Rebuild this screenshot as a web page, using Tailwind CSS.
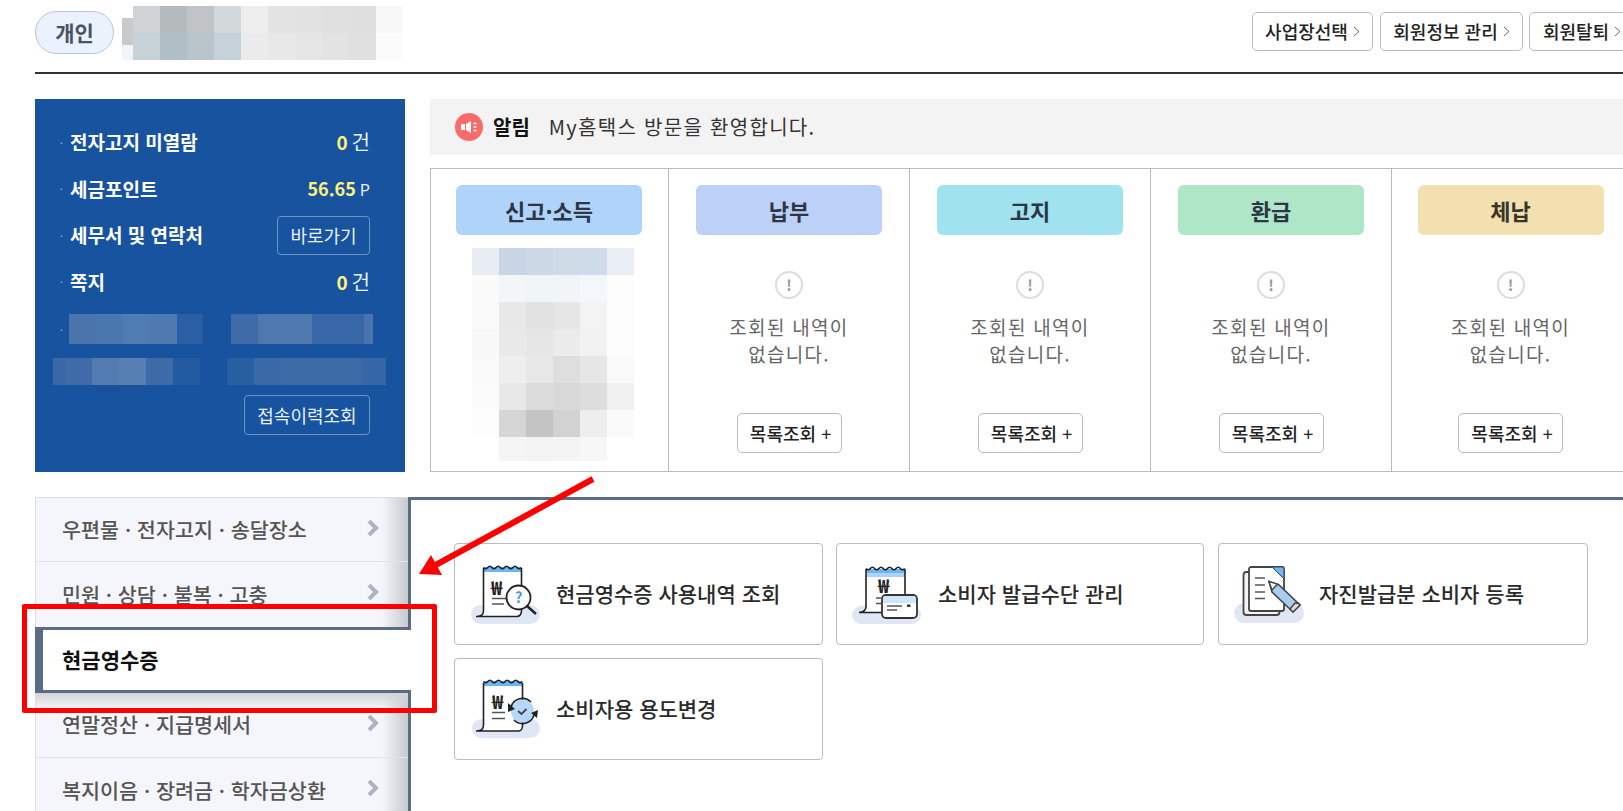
<!DOCTYPE html>
<html lang="ko">
<head>
<meta charset="UTF-8" />
<title>My 홈택스</title>
<script src="https://cdn.jsdelivr.net/npm/@tailwindcss/browser@4"></script>
</head>
<body class="font-['Noto_Sans_CJK_KR','Noto_Sans',sans-serif] bg-white text-[#222] w-[1623px] h-[811px] overflow-hidden relative">

<!-- header -->
<header class="h-[74px] ml-[35px] border-b-2 border-[#333] flex items-start overflow-hidden">
  <div class="mt-[11px] w-[79px] h-[43px] rounded-full border border-[#b5c6dd] bg-[#eaf3fd] flex items-center justify-center text-[21px] font-bold text-[#4a5263] shrink-0">개인</div>
  <div class="ml-[8px] mt-[18px] w-[11px] shrink-0">
    <div class="h-[27px] bg-[#c9cacb]"></div>
    <div class="h-[15px] bg-[#f0f5fa]"></div>
  </div>
  <div class="mt-[6px] grid grid-cols-[repeat(10,27px)] auto-rows-[27px] shrink-0">
    <div class="bg-[#cfd3d6]"></div><div class="bg-[#b5babd]"></div><div class="bg-[#c0c4c6]"></div><div class="bg-[#d3d8db]"></div><div class="bg-[#eeeeee]"></div><div class="bg-[#e3e3e3]"></div><div class="bg-[#e2e2e2]"></div><div class="bg-[#e0e0e0]"></div><div class="bg-[#dfdfdf]"></div><div class="bg-[#f8f8f8]"></div>
    <div class="bg-[#c7d2d8]"></div><div class="bg-[#b0bec5]"></div><div class="bg-[#b9c5ca]"></div><div class="bg-[#c5d2d9]"></div><div class="bg-[#ebebeb]"></div><div class="bg-[#e8e8e8]"></div><div class="bg-[#e6e6e6]"></div><div class="bg-[#e3e3e3]"></div><div class="bg-[#e0e0e0]"></div><div class="bg-[#fbfbfb]"></div>
  </div>
  <div class="ml-auto mt-[12px] flex gap-[7px] shrink-0 -mr-[12px]">
    <button class="h-[39px] w-[121px] rounded-[5px] border border-[#bbb] bg-white text-[18px] font-medium flex items-center justify-center gap-[5px]">사업장선택 <svg class="w-[7px] h-[11px]" viewBox="0 0 7 11" fill="none" stroke="#666"><path d="M1 1l5 4.5L1 10"/></svg></button>
    <button class="h-[39px] w-[143px] rounded-[5px] border border-[#bbb] bg-white text-[18px] font-medium flex items-center justify-center gap-[5px]">회원정보 관리 <svg class="w-[7px] h-[11px]" viewBox="0 0 7 11" fill="none" stroke="#666"><path d="M1 1l5 4.5L1 10"/></svg></button>
    <button class="-ml-px h-[39px] w-[106px] rounded-[5px] border border-[#bbb] bg-white text-[18px] font-medium flex items-center justify-center gap-[5px]">회원탈퇴 <svg class="w-[7px] h-[11px]" viewBox="0 0 7 11" fill="none" stroke="#666"><path d="M1 1l5 4.5L1 10"/></svg></button>
  </div>
</header>

<!-- top section -->
<section class="mt-[25px] ml-[35px] flex items-start">
  <div class="w-[370px] h-[373px] bg-[#17539f] text-white pt-[20px] shrink-0">
    <div class="h-[46.5px] flex items-center pl-[25px] pr-[35px] text-[19px] font-bold">
      <span class="w-[10px] text-[#9fbde0] text-[10px] font-normal">·</span><span>전자고지 미열람</span>
      <span class="ml-auto font-normal text-[20px] text-[#e8f0fa]"><b class="text-[#fff27d] text-[19px] mr-[4px]">0</b>건</span>
    </div>
    <div class="h-[46.5px] flex items-center pl-[25px] pr-[35px] text-[19px] font-bold">
      <span class="w-[10px] text-[#9fbde0] text-[10px] font-normal">·</span><span>세금포인트</span>
      <span class="ml-auto font-normal text-[16px] text-[#e8f0fa]"><b class="text-[#fff27d] text-[18px] mr-[4px]">56.65</b>P</span>
    </div>
    <div class="h-[46.5px] flex items-center pl-[25px] pr-[35px] text-[19px] font-bold">
      <span class="w-[10px] text-[#9fbde0] text-[10px] font-normal">·</span><span>세무서 및 연락처</span>
      <button class="ml-auto w-[93px] h-[39px] rounded-[4px] border border-[#6a93cb] text-[18px] font-normal text-[#e8f0fa]">바로가기</button>
    </div>
    <div class="h-[46.5px] flex items-center pl-[25px] pr-[35px] text-[19px] font-bold">
      <span class="w-[10px] text-[#9fbde0] text-[10px] font-normal">·</span><span>쪽지</span>
      <span class="ml-auto font-normal text-[20px] text-[#e8f0fa]"><b class="text-[#fff27d] text-[19px] mr-[4px]">0</b>건</span>
    </div>
    <div class="mt-[9px] h-[30px] flex items-center pl-[25px]">
      <span class="w-[9px] text-[#9fbde0] text-[10px]">·</span>
      <div class="flex h-[30px]">
        <div class="w-[27px] bg-[#4a74ab]"></div><div class="w-[27px] bg-[#4a78ae]"></div><div class="w-[27px] bg-[#4f7cb1]"></div><div class="w-[27px] bg-[#4f7ab0]"></div><div class="w-[26px] bg-[#2a5fa5]"></div>
        <div class="ml-[28px] w-[27px] bg-[#3f6ca8]"></div><div class="w-[54px] bg-[#4f78ae]"></div><div class="w-[52px] bg-[#3767a6]"></div><div class="w-[9px] bg-[#4a74ad]"></div>
      </div>
    </div>
    <div class="mt-[14px] h-[27px] flex pl-[18px]">
      <div class="w-[12px] bg-[#3a68a6]"></div><div class="w-[27px] bg-[#3f6ca9]"></div><div class="w-[27px] bg-[#527cb1]"></div><div class="w-[27px] bg-[#567fb3]"></div><div class="w-[27px] bg-[#3e6ba8]"></div><div class="w-[27px] bg-[#225aa2]"></div>
      <div class="ml-[27px] w-[27px] bg-[#2660a3]"></div><div class="w-[27px] bg-[#3a69a7]"></div><div class="w-[81px] bg-[#3d6ba8]"></div><div class="w-[24px] bg-[#3567a6]"></div>
    </div>
    <div class="mt-[10px] flex justify-end pr-[35px]">
      <button class="w-[126px] h-[40px] rounded-[4px] border border-[#6a93cb] text-[18px] text-[#e8f0fa]">접속이력조회</button>
    </div>
  </div>

  <div class="ml-[25px] w-[1200px] shrink-0">
    <div class="h-[56px] bg-[#f3f3f3] flex items-center pl-[25px]">
      <svg class="w-[28px] h-[28px]" viewBox="0 0 28 28">
        <circle cx="14" cy="14" r="14" fill="#f96b6b"/>
        <rect x="6" y="11" width="4" height="6" fill="#fff"/>
        <path d="M11 11l5-3v12l-5-3z" fill="#fff"/>
        <path d="M18.500 10.500h3M18.500 14h3M18.500 17.500h3" stroke="#fff" stroke-width="1.500"/>
      </svg>
      <b class="ml-[10px] text-[20px] font-bold text-[#111]">알림</b>
      <span class="ml-[19px] text-[20px] tracking-[1.3px] text-[#333]">My홈택스 방문을 환영합니다.</span>
    </div>

    <div class="mt-[13px] h-[304px] border border-[#bbb] border-r-0 flex">
      <div class="w-[238px] shrink-0 border-r border-[#bbb] pt-[16px] pl-[25px]">
        <div class="w-[186px] h-[50px] rounded-[6px] bg-[#b0d3fa] flex items-center justify-center text-[22px] font-bold text-[#2c3644]">신고·소득</div>
        <div class="mt-[13px] ml-[16px] grid grid-cols-[repeat(6,27px)] auto-rows-[27px]">
          <div class="bg-[#e8edf4]"></div><div class="bg-[#c8d5e5]"></div><div class="bg-[#ccd8e6]"></div><div class="bg-[#d0dbe8]"></div><div class="bg-[#cfdbe8]"></div><div class="bg-[#e9eef4]"></div>
          <div class="bg-[#fafafa]"></div><div class="bg-[#f2f6f9]"></div><div class="bg-[#eff4f7]"></div><div class="bg-[#f1f5f8]"></div><div class="bg-[#f3f7fb]"></div><div class="bg-[#fcfcfc]"></div>
          <div class="bg-[#fafafa]"></div><div class="bg-[#e8e8e8]"></div><div class="bg-[#e2e2e2]"></div><div class="bg-[#e6e6e6]"></div><div class="bg-[#f3f3f3]"></div><div class="bg-[#fcfcfc]"></div>
          <div class="bg-[#f8f8f8]"></div><div class="bg-[#e9e9e9]"></div><div class="bg-[#e6e6e6]"></div><div class="bg-[#ebebeb]"></div><div class="bg-[#f2f2f2]"></div><div class="bg-[#fcfcfc]"></div>
          <div class="bg-[#f9f9f9]"></div><div class="bg-[#eeeeee]"></div><div class="bg-[#e8e8e8]"></div><div class="bg-[#dedede]"></div><div class="bg-[#e6e6e6]"></div><div class="bg-[#f9f9f9]"></div>
          <div class="bg-[#fbfbfb]"></div><div class="bg-[#e8e8e8]"></div><div class="bg-[#dcdcdc]"></div><div class="bg-[#d8d8d8]"></div><div class="bg-[#dddddd]"></div><div class="bg-[#f0f0f0]"></div>
          <div class="bg-[#fdfdfd]"></div><div class="bg-[#d6d6d6]"></div><div class="bg-[#c4c4c4]"></div><div class="bg-[#d2d2d2]"></div><div class="bg-[#eeeeee]"></div><div class="bg-[#fafafa]"></div>
          <div class="bg-white h-[24px]"></div><div class="bg-[#f5f5f5] h-[24px]"></div><div class="bg-[#f3f3f3] h-[24px]"></div><div class="bg-[#f4f4f4] h-[24px]"></div><div class="bg-[#f7f7f7] h-[24px]"></div><div class="bg-white h-[24px]"></div>
        </div>
      </div>

      <div class="w-[241px] shrink-0 border-r border-[#bbb] pt-[16px] flex flex-col items-center">
        <div class="w-[186px] h-[50px] rounded-[6px] bg-[#bcd0f8] flex items-center justify-center text-[22px] font-bold text-[#2c3644]">납부</div>
        <div class="mt-[36px] w-[28px] h-[28px] rounded-full border-2 border-[#ddd] flex items-center justify-center text-[15px] font-bold text-[#999]">!</div>
        <p class="mt-[14px] text-[19px] leading-[27px] tracking-[1.3px] text-[#666] text-center">조회된 내역이<br />없습니다.</p>
        <button class="mt-[46px] w-[105px] h-[40px] rounded-[5px] border border-[#bbb] bg-white text-[18px] font-medium pl-[3px]">목록조회 <span class="font-normal">+</span></button>
      </div>
      <div class="w-[241px] shrink-0 border-r border-[#bbb] pt-[16px] flex flex-col items-center">
        <div class="w-[186px] h-[50px] rounded-[6px] bg-[#a0e3ef] flex items-center justify-center text-[22px] font-bold text-[#2c3644]">고지</div>
        <div class="mt-[36px] w-[28px] h-[28px] rounded-full border-2 border-[#ddd] flex items-center justify-center text-[15px] font-bold text-[#999]">!</div>
        <p class="mt-[14px] text-[19px] leading-[27px] tracking-[1.3px] text-[#666] text-center">조회된 내역이<br />없습니다.</p>
        <button class="mt-[46px] w-[105px] h-[40px] rounded-[5px] border border-[#bbb] bg-white text-[18px] font-medium pl-[3px]">목록조회 <span class="font-normal">+</span></button>
      </div>
      <div class="w-[241px] shrink-0 border-r border-[#bbb] pt-[16px] flex flex-col items-center">
        <div class="w-[186px] h-[50px] rounded-[6px] bg-[#aee6c7] flex items-center justify-center text-[22px] font-bold text-[#2c3644]">환급</div>
        <div class="mt-[36px] w-[28px] h-[28px] rounded-full border-2 border-[#ddd] flex items-center justify-center text-[15px] font-bold text-[#999]">!</div>
        <p class="mt-[14px] text-[19px] leading-[27px] tracking-[1.3px] text-[#666] text-center">조회된 내역이<br />없습니다.</p>
        <button class="mt-[46px] w-[105px] h-[40px] rounded-[5px] border border-[#bbb] bg-white text-[18px] font-medium pl-[3px]">목록조회 <span class="font-normal">+</span></button>
      </div>
      <div class="w-[237px] shrink-0 pt-[16px] flex flex-col items-center">
        <div class="w-[186px] h-[50px] rounded-[6px] bg-[#f3e0b0] flex items-center justify-center text-[22px] font-bold text-[#3a3528]">체납</div>
        <div class="mt-[36px] w-[28px] h-[28px] rounded-full border-2 border-[#ddd] flex items-center justify-center text-[15px] font-bold text-[#999]">!</div>
        <p class="mt-[14px] text-[19px] leading-[27px] tracking-[1.3px] text-[#666] text-center">조회된 내역이<br />없습니다.</p>
        <button class="mt-[46px] w-[105px] h-[40px] rounded-[5px] border border-[#bbb] bg-white text-[18px] font-medium pl-[3px]">목록조회 <span class="font-normal">+</span></button>
      </div>
    </div>
  </div>
</section>

<!-- lower section -->
<section class="mt-[25px] ml-[35px] flex items-start h-[320px]">
  <nav class="w-[373px] shrink-0 relative z-10 border-t border-l border-[#ddd] bg-[#f5f6fb] text-[20.7px] font-medium text-[#555]">
    <a class="relative h-[64px] flex items-center pl-[26px] border-b border-[#e2e3ea]">우편물 · 전자고지 · 송달장소
      <svg class="absolute left-[331px] top-[22px] w-[12px] h-[16px]" viewBox="0 0 12 16" fill="none" stroke="#aeb2c2" stroke-width="4"><path d="M2 1l7 7-7 7"/></svg>
      <span class="absolute right-0 top-0 bottom-0 w-[26px] bg-linear-to-r from-transparent to-[#c7c9d0]"></span></a>
    <a class="relative h-[65px] flex items-center pl-[26px]">민원 · 상담 · 불복 · 고충
      <svg class="absolute left-[331px] top-[22px] w-[12px] h-[16px]" viewBox="0 0 12 16" fill="none" stroke="#aeb2c2" stroke-width="4"><path d="M2 1l7 7-7 7"/></svg>
      <span class="absolute right-0 top-0 bottom-0 w-[26px] bg-linear-to-r from-transparent to-[#c7c9d0]"></span></a>
    <a class="h-[66px] w-[376px] -ml-px bg-white border-y-[3px] border-l-[8px] border-[#5a6b88] flex items-center pl-[19px] text-[21px] font-bold text-[#111]">현금영수증</a>
    <a class="relative h-[65px] flex items-center pl-[26px] border-b border-[#e2e3ea]">연말정산 · 지급명세서
      <svg class="absolute left-[331px] top-[22px] w-[12px] h-[16px]" viewBox="0 0 12 16" fill="none" stroke="#aeb2c2" stroke-width="4"><path d="M2 1l7 7-7 7"/></svg>
      <span class="absolute right-0 top-0 bottom-0 w-[26px] bg-linear-to-r from-transparent to-[#c7c9d0]"></span>
      <span class="absolute left-0 right-0 top-0 h-[16px] bg-linear-to-b from-[#d3d5da] to-transparent"></span></a>
    <a class="relative h-[65px] flex items-center pl-[26px]">복지이음 · 장려금 · 학자금상환
      <svg class="absolute left-[331px] top-[22px] w-[12px] h-[16px]" viewBox="0 0 12 16" fill="none" stroke="#aeb2c2" stroke-width="4"><path d="M2 1l7 7-7 7"/></svg>
      <span class="absolute right-0 top-0 bottom-0 w-[26px] bg-linear-to-r from-transparent to-[#c7c9d0]"></span></a>
  </nav>

  <main class="w-[1215px] h-[320px] shrink-0 border-t-[3px] border-l-[3px] border-[#5a6b88] pt-[43px] pl-[43px] grid grid-cols-[369px_368px_371px] auto-rows-[102px] gap-x-[13px] gap-y-[13px] content-start">
    <a class="rounded-[4px] border border-[#bbb] flex items-center pl-[15px] text-[21px] font-medium text-[#2a2a2a]">
      <svg class="w-[80px] h-[66px] shrink-0" viewBox="0 0 80 66" fill="none">
        <rect x="1" y="44" width="69" height="19" rx="9.500" fill="#dfe7f5"/>
        <path d="M7 55.500c4 0 6.500-2 6.500-6V7.500h38V50c0 3-2 5.500-5 5.500z" fill="#fff"/>
        <path d="M13.500 6h38v5h-38z" fill="#6cb6f5"/>
        <path d="M6 55.500h41c2.500 0 4.500-2.500 4.500-5.500V7M13.500 7v42.500c0 4-2.500 6-6.500 6" stroke="#222" stroke-width="1.600"/>
        <path d="M13.500 6.500q2.100 2.500 4.200 0t4.200 0t4.200 0t4.200 0t4.200 0t4.200 0t4.200 0t4.200 0t4.200 0" stroke="#222" stroke-width="1.600"/>
        <text x="21" y="34" font-size="19" font-weight="700" fill="#222" font-family="Noto Sans CJK KR, sans-serif">₩</text>
        <path d="M22 37.500h14M22 43h12" stroke="#555" stroke-width="1.600"/>
        <circle cx="48.500" cy="36.500" r="12" fill="#fff" stroke="#222" stroke-width="1.800"/>
        <path d="M57 45l9 8" stroke="#222" stroke-width="2.400"/>
        <text x="48.500" y="42" text-anchor="middle" font-size="15" font-weight="700" fill="#4c9be0" font-family="Noto Sans CJK KR, sans-serif">?</text>
      </svg>
      <span class="ml-[6px]">현금영수증 사용내역 조회</span>
    </a>
    <a class="rounded-[4px] border border-[#bbb] flex items-center pl-[15px] text-[21px] font-medium text-[#2a2a2a]">
      <svg class="w-[80px] h-[66px] shrink-0" viewBox="0 0 80 66" fill="none">
        <rect x="0" y="45" width="69" height="18" rx="9" fill="#dfe7f5"/>
        <path d="M14 8h39v43H14z" fill="#fff"/>
        <path d="M14 8h39v8H14z" fill="#a9d3f8"/>
        <path d="M14 8h39v4H14z" fill="#6cb6f5"/>
        <path d="M14 8v38c0 3-3 5.500-7 5.500h23M53 8v27" stroke="#222" stroke-width="1.600"/>
        <path d="M14 7.500q2.200 2.500 4.300 0t4.300 0t4.300 0t4.300 0t4.300 0t4.300 0t4.300 0t4.300 0t4.300 0" stroke="#222" stroke-width="1.600"/>
        <text x="26" y="32" font-size="19" font-weight="700" fill="#222" font-family="Noto Sans CJK KR, sans-serif">₩</text>
        <path d="M24 37h5M24 42.500h5" stroke="#555" stroke-width="1.500"/>
        <rect x="30" y="34" width="35" height="23" rx="4" fill="#fff" stroke="#333" stroke-width="1.800"/>
        <path d="M31 38a3 3 0 013-3h27a3 3 0 013 3v4H31z" fill="#cfe5fa"/>
        <path d="M35 45h15M35 49h10" stroke="#555" stroke-width="1.600"/>
        <rect x="55" y="43.500" width="3.500" height="2.500" fill="#333"/>
      </svg>
      <span class="ml-[6px]">소비자 발급수단 관리</span>
    </a>
    <a class="ml-px rounded-[4px] border border-[#bbb] flex items-center pl-[15px] text-[21px] font-medium text-[#2a2a2a]">
      <svg class="w-[80px] h-[66px] shrink-0" viewBox="0 0 80 66" fill="none">
        <rect x="0" y="42" width="70" height="20" rx="10" fill="#dfe7f5"/>
        <rect x="9.500" y="11" width="36" height="43" rx="3" fill="#f3f5f8" stroke="#444" stroke-width="1.800"/>
        <rect x="15" y="6" width="35" height="44" rx="2" fill="#fff" stroke="#444" stroke-width="1.800"/>
        <path d="M38 6h10a2 2 0 012 2v10z" fill="#6cb6f5" stroke="#444" stroke-width="1"/>
        <path d="M21 17h10M21 24h10M21 31h10M21 37.500h10" stroke="#555" stroke-width="1.600"/>
        <path d="M35 20.500l10 3.500 21 20-7 7-21-20z" fill="#a9cdf0" stroke="#444" stroke-width="1.600"/>
        <path d="M35 20.500l8.500 2.500-5.500 6z" fill="#fff" stroke="#444" stroke-width="1.400"/>
        <path d="M61 42l-5 6 3 3 7-7-1.500-1.500z" fill="#ddd" stroke="#444" stroke-width="1.400"/>
      </svg>
      <span class="ml-[5px]">자진발급분 소비자 등록</span>
    </a>
    <a class="rounded-[4px] border border-[#bbb] flex items-center pl-[15px] text-[21px] font-medium text-[#2a2a2a]">
      <svg class="w-[80px] h-[66px] shrink-0" viewBox="0 0 80 66" fill="none">
        <rect x="2" y="43" width="68" height="19" rx="9.500" fill="#dfe7f5"/>
        <path d="M7 55c4 0 6.500-2 6.500-6V6h39v44c0 3-2 5-5 5z" fill="#fff"/>
        <path d="M13.500 5h39v5h-39z" fill="#6cb6f5"/>
        <path d="M6 55h42c2.500 0 4.500-2 4.500-5V7M13.500 7v42c0 4-2.500 6-6.500 6" stroke="#222" stroke-width="1.600"/>
        <path d="M13.500 5.500q2.200 2.500 4.300 0t4.300 0t4.300 0t4.300 0t4.300 0t4.300 0t4.300 0t4.300 0t4.300 0" stroke="#222" stroke-width="1.600"/>
        <text x="22" y="33" font-size="19" font-weight="700" fill="#222" font-family="Noto Sans CJK KR, sans-serif">₩</text>
        <path d="M22 36.500h13M22 42.500h13" stroke="#555" stroke-width="1.600"/>
        <circle cx="52.500" cy="35" r="11.500" fill="#b5d8fa"/>
        <path d="M48 35l3.500 3 5-5" stroke="#444" stroke-width="1.800"/>
        <path d="M41 31a12 12 0 0120-5M64 39a12 12 0 01-20 5" stroke="#222" stroke-width="1.600"/>
        <path d="M38 27l7 6-7 3zM67 42l-6-5 7-3z" fill="#222"/>
      </svg>
      <span class="ml-[6px]">소비자용 용도변경</span>
    </a>
  </main>
</section>

<!-- red annotation -->
<div class="absolute left-[22px] top-[604px] w-[415px] h-[109px] border-[5px] border-[#f00] rounded-[2px] z-20"></div>
<svg class="absolute left-0 top-0 w-[1623px] h-[811px] z-20 pointer-events-none" viewBox="0 0 1623 811" fill="none">
  <path d="M593 479L432 567" stroke="#f00" stroke-width="6"/>
  <path d="M419 574l12-19 11 20z" fill="#f00"/>
</svg>

</body>
</html>
